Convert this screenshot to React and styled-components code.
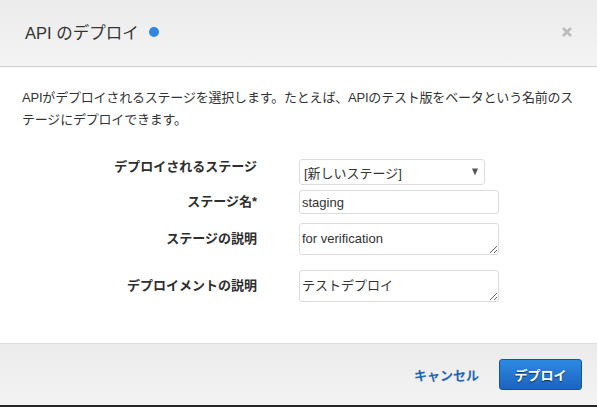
import React from "react";
import styled, { createGlobalStyle } from "styled-components";

const Global = createGlobalStyle`
  html, body { margin: 0; padding: 0; background: #fff; }
  body { font-family: "Liberation Sans", "Noto Sans CJK JP", sans-serif; color: #333; }
  * { box-sizing: border-box; }
`;

const Modal = styled.div`
  width: 597px;
  height: 407px;
  display: flex;
  flex-direction: column;
  background: #fff;
  border-bottom: 2px solid #262626;
`;

const Header = styled.div`
  height: 67px;
  flex: none;
  display: flex;
  align-items: center;
  padding: 0 25px 0 25px;
  background: linear-gradient(#ebebeb, #f4f4f4);
  border-bottom: 1px solid #cfcfcf;
`;

const Title = styled.h1`
  margin: 0;
  font-size: 16.5px;
  font-weight: normal;
  color: #333;
  display: flex;
  align-items: center;
  gap: 10px;
  flex: 1;
  padding-bottom: 2px;
`;

const Dot = styled.span`
  width: 10px;
  height: 10px;
  border-radius: 50%;
  background: #2f87e1;
  display: inline-block;
`;

const Close = styled.button`
  border: none;
  background: none;
  padding: 0;
  width: 10px;
  height: 10px;
  display: flex;
  cursor: pointer;
  margin-bottom: 2px;
`;

const Body = styled.div`
  flex: 1;
  padding: 20px 22px 0 22px;
`;

const Intro = styled.p`
  margin: 0;
  font-size: 13px;
  line-height: 22px;
  color: #333;
  letter-spacing: -0.2px;
`;

const Form = styled.div`
  margin-top: 28px;
  display: flex;
  flex-direction: column;
`;

const Row = styled.div`
  display: flex;
  align-items: ${(p) => (p.$top ? "flex-start" : "center")};
  gap: 42px;
  margin-top: ${(p) => p.$mt || 0}px;
`;

const Label = styled.label`
  width: 235px;
  text-align: right;
  font-size: 13px;
  font-weight: bold;
  color: #2e2e2e;
  line-height: 18px;
  margin-top: ${(p) => (p.$top ? "-1px" : "0")};
`;

const SelectBox = styled.div`
  position: relative;
  width: 186px;
  height: 26px;
  border: 1px solid #dcdcdc;
  border-radius: 3px;
  background: #fff;
  display: flex;
  align-items: center;
  padding-left: 4px;
  font-size: 13px;
  color: #333;
`;

const Arrow = styled.span`
  position: absolute;
  right: 6px;
  top: 50%;
  transform: translateY(-50%);
  width: 0;
  height: 0;
  border-left: 3.5px solid transparent;
  border-right: 3.5px solid transparent;
  border-top: 7px solid #555;
`;

const TextInput = styled.input`
  width: 200px;
  height: 24px;
  border: 1px solid #dcdcdc;
  border-radius: 3px;
  padding: 0 2px;
  font-family: "Liberation Sans", "Noto Sans CJK JP", sans-serif;
  font-size: 13px;
  color: #333;
  outline: none;
`;

const TextArea = styled.textarea`
  display: block;
  width: 200px;
  height: 32px;
  border: 1px solid #dcdcdc;
  border-radius: 3px;
  padding: 7px 2px 0 2px;
  font-family: "Liberation Sans", "Noto Sans CJK JP", sans-serif;
  font-size: 13px;
  line-height: 16px;
  color: #333;
  outline: none;
  resize: both;
  overflow: hidden;
`;

const Footer = styled.div`
  height: 62px;
  flex: none;
  display: flex;
  align-items: center;
  justify-content: flex-end;
  gap: 20px;
  padding: 0 15px 0 0;
  background: linear-gradient(#ebebeb, #f3f3f3);
  border-top: 1px solid #dedede;
`;

const LinkButton = styled.button`
  border: none;
  background: none;
  padding: 0;
  font-family: "Liberation Sans", "Noto Sans CJK JP", sans-serif;
  font-size: 13px;
  font-weight: bold;
  color: #1d64bb;
  cursor: pointer;
`;

const PrimaryButton = styled.button`
  width: 83px;
  height: 31px;
  border: 1px solid #14539e;
  border-radius: 3px;
  background: linear-gradient(#2e8ae4, #1b63be);
  color: #fff;
  font-family: "Liberation Sans", "Noto Sans CJK JP", sans-serif;
  font-size: 13px;
  font-weight: bold;
  text-shadow: 0 1px 1px rgba(0, 0, 0, 0.6);
  cursor: pointer;
`;

export default function App() {
  return (
    <>
      <Global />
      <Modal>
        <Header>
          <Title>
            API のデプロイ <Dot />
          </Title>
          <Close aria-label="close">
            <svg width="10" height="10" viewBox="0 0 10 10">
              <path d="M1 1 L9 9 M9 1 L1 9" stroke="#bcbcbc" strokeWidth="2.6" />
            </svg>
          </Close>
        </Header>
        <Body>
          <Intro>
            APIがデプロイされるステージを選択します。たとえば、APIのテスト版をベータという名前のステージにデプロイできます。
          </Intro>
          <Form>
            <Row $top>
              <Label $top>デプロイされるステージ</Label>
              <SelectBox>
                [新しいステージ]
                <Arrow />
              </SelectBox>
            </Row>
            <Row $mt={5}>
              <Label>ステージ名*</Label>
              <TextInput defaultValue="staging" />
            </Row>
            <Row $mt={9}>
              <Label>ステージの説明</Label>
              <TextArea defaultValue="for verification" />
            </Row>
            <Row $mt={15}>
              <Label>デプロイメントの説明</Label>
              <TextArea defaultValue="テストデプロイ" />
            </Row>
          </Form>
        </Body>
        <Footer>
          <LinkButton>キャンセル</LinkButton>
          <PrimaryButton>デプロイ</PrimaryButton>
        </Footer>
      </Modal>
    </>
  );
}
